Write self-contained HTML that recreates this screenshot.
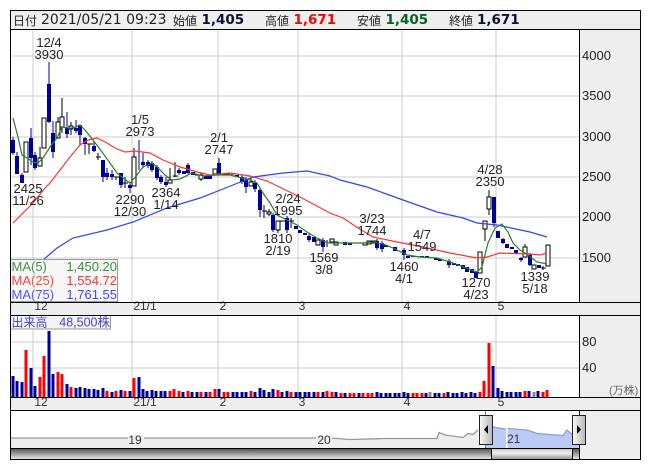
<!DOCTYPE html>
<html lang="ja">
<head>
<meta charset="utf-8">
<title>Chart</title>
<style>
html,body{margin:0;padding:0;background:#fff;width:653px;height:470px;overflow:hidden}
svg{display:block}
text{font-family:"Liberation Sans","Noto Sans CJK JP",sans-serif;fill:#222;font-size:13px}
.h{font-family:"DejaVu Sans","Noto Sans CJK JP",sans-serif;font-size:14px;fill:#222}
.k{font-family:"Noto Sans CJK JP",sans-serif;font-size:12px;fill:#222}
.b{font-family:"DejaVu Sans",sans-serif;font-size:13.5px;font-weight:bold;fill:#111133}
.c{text-anchor:middle}
.d{font-size:12px;text-anchor:middle;fill:#333}
</style>
</head>
<body>
<svg width="653" height="470" viewBox="0 0 653 470" xmlns="http://www.w3.org/2000/svg">
<defs>
<linearGradient id="sd" x1="0" y1="0" x2="0" y2="1"><stop offset="0" stop-color="#4a4a4a"/><stop offset="1" stop-color="#e6e6e6"/></linearGradient>
<linearGradient id="st" x1="0" y1="0" x2="0" y2="1"><stop offset="0" stop-color="#bdbdbd"/><stop offset=".45" stop-color="#f0f0f0"/><stop offset="1" stop-color="#9a9a9a"/></linearGradient>
<linearGradient id="hl" x1="0" y1="0" x2="1" y2="0"><stop offset="0" stop-color="#fafafa"/><stop offset="1" stop-color="#b5b5b5"/></linearGradient>
</defs>

<rect x="10" y="10" width="631" height="450" fill="#fff"/>
<rect x="11" y="11" width="629" height="18" fill="#eee"/>
<rect x="580" y="30" width="60" height="429" fill="#eee"/>
<rect x="11" y="303" width="629" height="12" fill="#eee"/>
<rect x="11" y="398" width="629" height="12" fill="#eee"/>

<g shape-rendering="crispEdges">
<path d="M33 30V302M132 30V302M218 30V302M298 30V302M402 30V302M496 30V302M33 315V397M132 315V397M218 315V397M298 315V397M402 315V397M496 315V397M11 56H579M11 96H579M11 137H579M11 177H579M11 217H579M11 258H579M11 342H579M11 368H579" stroke="#ccc" fill="none"/>

<!-- volume -->
<path fill="none" stroke="#ff0000" stroke-width="3" d="M26 397V350M40 397V377M44 397V356M58 397V372M62 397V374M71 397V387M107 397V391M116 397V391M125 397V391M134 397V378M170 397V391M174 397V389M179 397V391M188 397V391M201 397V392M210 397V392M215 397V389M224 397V392M228 397V392M251 397V391M278 397V390M291 397V392M318 397V392M327 397V391M332 397V392M341 397V393M350 397V393M354 397V393M363 397V393M368 397V393M372 397V393M413 397V393M417 397V393M422 397V393M444 397V393M480 397V392M484 397V381M489 397V343M525 397V391M543 397V392M547 397V390"/>
<path fill="none" stroke="#000099" stroke-width="3" d="M13 397V376M17 397V381M22 397V382M31 397V368M35 397V386M49 397V331M53 397V374M67 397V384M76 397V388M80 397V387M85 397V388M89 397V389M94 397V389M98 397V390M103 397V388M112 397V392M121 397V390M130 397V391M139 397V377M143 397V389M147 397V391M152 397V390M156 397V391M161 397V391M165 397V391M183 397V392M192 397V392M197 397V392M206 397V392M219 397V389M233 397V392M237 397V392M242 397V392M246 397V392M255 397V392M260 397V388M264 397V390M269 397V392M273 397V389M282 397V392M287 397V391M296 397V392M300 397V392M305 397V392M309 397V392M314 397V392M323 397V392M336 397V392M345 397V393M359 397V393M377 397V392M381 397V393M386 397V393M390 397V393M395 397V393M399 397V393M404 397V392M408 397V393M426 397V393M435 397V393M439 397V393M448 397V392M453 397V393M457 397V393M462 397V392M466 397V393M471 397V392M475 397V393M493 397V366M498 397V388M502 397V391M507 397V392M511 397V392M516 397V392M520 397V392M529 397V391M538 397V391"/>
<path fill="none" stroke="#888" stroke-width="3" d="M430 397V392M534 397V392"/>

<!-- candle wicks -->
<path fill="none" stroke="#000099" d="M13 137V155M17 152V174M22 173V183M31 128V165M35 152V170M49 62V123M53 121V158M67 112V138M76 120V133M80 125V145M85 137V155M94 141V152M103 160V182M107 168V180M112 170V180M121 173V188M130 183V193M139 140V170M143 153V168M148 160V168M152 161V172M157 165V180M161 175V184M166 177V187M179 168V175M188 163V174M219 158V175M242 175V184M246 177V193M255 180V192M260 188V217M273 213V232M287 216V233M309 234V242M323 238V252M377 239V250M382 241V252M404 248V260M449 259V268M494 197V227M503 238V244M521 257V262M530 253V266"/>
<path fill="none" stroke="#000" d="M40 147V166M58 117V138M62 98V133M71 122V135M89 144V154M98 153V160M116 177V180M125 177V188M134 148V157M170 168V183M175 162V177M201 173V181M251 178V186M264 205V218M269 209V216M278 230V233M291 218V228M327 240V247M485 229V241M489 190V215M525 244V247M543 266V270"/>

<!-- blue bodies -->
<path fill="none" stroke="#000099" stroke-width="4" d="M13 140V153M17 156V174M22 175V183M31 138V158M35 155V168M49 84V122M53 133V152M67 128V134M76 128V131M80 125V135M85 138V144M94 146V151M103 160V177M107 173V177M112 174V177M121 173V185M130 185V188M143 162V165M148 162V166M152 163V170M157 167V178M161 177V182M166 182V185M179 170V173M184 171V174M188 165V173M193 172V175M206 176V179M210 176V179M219 163V174M228 173V175M237 175V177M242 177V182M246 180V187M255 183V189M260 190V210M273 215V230M287 218V230M296 226V229M300 230V233M305 233V235M309 236V240M314 237V242M323 240V247M345 242V245M350 243V245M377 241V248M382 243V249M386 245V247M395 247V251M404 250V255M408 256V258M413 256V257M417 256V257M422 256V257M427 256V258M436 258V260M440 259V261M449 261V265M454 263V265M458 264V266M463 265V269M467 267V272M472 269V273M476 272V278M494 197V223M498 231V238M503 239V243M507 244V248M512 247V249M516 250V254M521 258V260M530 255V265M539 265V268"/>

<!-- doji -->
<path fill="none" stroke="#000" d="M87 144h6M96 157h5M114 177h5M123 183h5M173 176h5M195 175h5M222 174h5M231 174h5M262 211h5M280 221h5M289 221h5M341 243h5M355 243h5M360 243h5M541 268h5"/>

<!-- white bodies -->
<path fill="#fff" stroke="#000" d="M24 142h4v30h-4zM38 158h4v8h-4zM42 118h4v30h-4zM56 122h4v16h-4zM60 117h4v10h-4zM69 126h4v3h-4zM132 157h4v29h-4zM168 180h4v3h-4zM199 175h4v4h-4zM213 169h4v5h-4zM249 182h4v4h-4zM267 212h4v2h-4zM276 221h4v9h-4zM316 240h4v5h-4zM330 239h4v3h-4zM334 242h4v3h-4zM363 243h4v2h-4zM367 241h4v3h-4zM372 241h4v2h-4zM478 252h4v21h-4zM483 221h4v8h-4zM487 197h4v12h-4zM523 247h4v10h-4zM532 265h4v4h-4zM546 245h4v21h-4z"/>
</g>

<!-- moving averages -->
<path fill="none" stroke="#ff3333" stroke-width="1.2" d="M13 223L33 203L45 188L50 183L60 170L70 157L80 145L88 140L97 138L105 142L117 149L125 152L135 151L150 153L163 160L180 167L197 172L210 175L230 173L250 176L267 181L300 197L330 213L343 218L358 228L373 237L397 242L423 247L450 253L477 258L487 257L500 253L530 254L540 255L547 253"/>
<path fill="none" stroke="#3344ee" stroke-width="1.2" d="M43 260L57 248L73 238L107 230L133 222L167 208L200 198L233 185L253 177L283 173L307 171L330 176L340 180L367 187L403 200L437 212L463 218L477 223L497 225L530 232L547 237"/>
<path fill="none" stroke="#2a7d2a" stroke-width="1.2" d="M13 118L18 137L22 155L27 158L33 162L38 163L43 158L50 147L53 143L57 138L62 127L68 128L73 128L80 125L85 130L93 140L102 152L110 163L117 173L123 178L130 183L137 175L143 167L152 163L158 168L165 175L172 180L180 179L192 173L203 176L217 175L230 175L242 178L250 180L257 183L263 193L270 203L277 215L283 218L297 225L307 232L317 238L328 243L350 243L363 243L373 242L383 244L393 248L407 255L420 257L437 258L453 263L463 267L477 272L482 267L488 243L495 228L502 224L508 232L513 243L520 250L528 255L537 262L547 264"/>

<!-- legend -->
<rect x="10.5" y="259.5" width="107" height="42" fill="#f4f4f4" fill-opacity=".85" stroke="#999"/>
<text x="11.5" y="271" style="fill:#4a8f4a">MA(5)</text><text x="117" y="271" text-anchor="end" style="fill:#3c8c3c">1,450.20</text>
<text x="11.5" y="285" style="fill:#ff4444">MA(25)</text><text x="117" y="285" text-anchor="end" style="fill:#ff3333">1,554.72</text>
<text x="11.5" y="299" style="fill:#5555ff">MA(75)</text><text x="117" y="299" text-anchor="end" style="fill:#4444ff">1,761.55</text>

<rect x="10.5" y="315.5" width="100" height="13.5" fill="#f4f4f4" stroke="#999"/>
<text x="11.5" y="326.5" style="font-size:12px;fill:#4444cc">出来高</text>
<text x="110" y="326.5" text-anchor="end" style="font-size:12.5px;fill:#4444cc">48,500株</text>

<!-- price labels -->
<g class="c">
<text class="c" x="49" y="47">12/4</text><text class="c" x="49" y="59">3930</text>
<text class="c" x="140" y="124">1/5</text><text class="c" x="140" y="136">2973</text>
<text class="c" x="219" y="142">2/1</text><text class="c" x="219" y="154">2747</text>
<text class="c" x="28" y="193">2425</text><text class="c" x="28" y="205">11/26</text>
<text class="c" x="130" y="204">2290</text><text class="c" x="130" y="216">12/30</text>
<text class="c" x="166" y="197">2364</text><text class="c" x="166" y="209">1/14</text>
<text class="c" x="288" y="203">2/24</text><text class="c" x="288" y="215">1995</text>
<text class="c" x="278" y="243">1810</text><text class="c" x="278" y="255">2/19</text>
<text class="c" x="324" y="262">1569</text><text class="c" x="324" y="274">3/8</text>
<text class="c" x="372" y="223">3/23</text><text class="c" x="372" y="235">1744</text>
<text class="c" x="422" y="239">4/7</text><text class="c" x="422" y="251">1549</text>
<text class="c" x="404" y="271">1460</text><text class="c" x="404" y="283">4/1</text>
<text class="c" x="476" y="287">1270</text><text class="c" x="476" y="299">4/23</text>
<text class="c" x="490" y="174">4/28</text><text class="c" x="490" y="186">2350</text>
<text class="c" x="535" y="281">1339</text><text class="c" x="535" y="293">5/18</text>
</g>

<!-- axis labels -->
<text x="582" y="60">4000</text><text x="582" y="100">3500</text><text x="582" y="141">3000</text>
<text x="582" y="181">2500</text><text x="582" y="221">2000</text><text x="582" y="262">1500</text>
<text x="582" y="346">80</text><text x="582" y="372">40</text>
<text x="609" y="394" style="font-size:11px;fill:#666">(万株)</text>

<text class="d" x="41" y="310">12</text><text class="d" x="145" y="310">21/1</text><text class="d" x="223" y="310">2</text><text class="d" x="302" y="310">3</text><text class="d" x="407" y="310">4</text><text class="d" x="501" y="310">5</text>
<text class="d" x="41" y="406">12</text><text class="d" x="145" y="406">21/1</text><text class="d" x="223" y="406">2</text><text class="d" x="302" y="406">3</text><text class="d" x="407" y="406">4</text><text class="d" x="501" y="406">5</text>

<!-- navigator -->
<path d="M11 438H330L350 439.5L380 438.7L385 438.5L437 438.5L439 432.5L445 435L463 437.5L468 433.5L473 434.5L478 430V448H11Z" fill="#eee"/>
<path d="M11 438H330L350 439.5L380 438.7L385 438.5L437 438.5L439 432.5L445 435L463 437.5L468 433.5L473 434.5L478 430" fill="none" stroke="#999" stroke-width="1.3"/>
<path d="M493 426L505 429L507 428.5L527 430L537 433.5L563 435.5L567 430L572 434.5L579 435V448H485V426Z" fill="#bccbf6"/>
<path d="M485 426L505 429L507 428.5L527 430L537 433.5L563 435.5L567 430L572 434.5L579 435" fill="none" stroke="#8a9ade" stroke-width="1.2"/>
<rect x="506" y="428" width="1.5" height="20" fill="#fff"/>
<text x="507" y="443" style="font-size:12px;fill:#333">21</text>
<rect x="128" y="436" width="16" height="9" fill="#eee"/>
<rect x="316" y="436" width="16" height="9" fill="#eee"/>
<text x="135" y="444" text-anchor="middle" style="font-size:12px;fill:#333">19</text>
<text x="324" y="444" text-anchor="middle" style="font-size:12px;fill:#333">20</text>
<g shape-rendering="crispEdges">
<path d="M485.5 410V415M485.5 444V448M579.5 410V415M579.5 444V448" stroke="#2299cc"/>
</g>

<!-- scrollbar -->
<rect x="11" y="448" width="480" height="11" fill="url(#sd)"/>
<rect x="491" y="448" width="81" height="11" fill="url(#st)"/>
<rect x="572" y="448" width="7" height="11" fill="url(#sd)"/>

<!-- frame lines -->
<g shape-rendering="crispEdges" stroke="#000" fill="none">
<path d="M10.5 10.5H640.5V459.5H10.5Z"/>
<path d="M10 29.5H641M10 302.5H641M10 315.5H641M10 397.5H641M10 410.5H641M10 448.5H580M579.5 29V302M579.5 315V397M579.5 410V460M491.5 448V459M572.5 448V459"/>
</g>

<!-- handles -->
<g shape-rendering="crispEdges">
<rect x="479.5" y="415.5" width="13" height="29" fill="url(#hl)" stroke="#222"/>
<rect x="572.5" y="415.5" width="13" height="29" fill="url(#hl)" stroke="#222"/>
</g>
<path d="M488 425V434L484 429.5Z" fill="#000"/>
<path d="M577 425V434L581 429.5Z" fill="#000"/>

<!-- header -->
<text class="k" x="13" y="25">日付</text>
<text class="h" x="41" y="24">2021/05/21 09:23</text>
<text class="k" x="173" y="25">始値</text>
<text class="b" x="201.5" y="24">1,405</text>
<text class="k" x="265" y="25">高値</text>
<text class="b" x="293.5" y="24" style="fill:#ff0000">1,671</text>
<text class="k" x="357" y="25">安値</text>
<text class="b" x="385.5" y="24" style="fill:#006622">1,405</text>
<text class="k" x="449" y="25">終値</text>
<text class="b" x="477" y="24">1,671</text>
</svg>
</body>
</html>
